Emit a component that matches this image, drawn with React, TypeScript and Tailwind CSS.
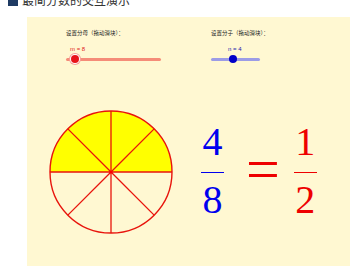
import React from 'react'

const cjk = { fontFamily: '"Noto Sans CJK SC", "Noto Sans", sans-serif' }
const serif = { fontFamily: '"Liberation Serif", "DejaVu Serif", serif' }

type SliderProps = {
  label: string
  value: string
  width: string
  trackColor: string
  thumb: React.ReactNode
  valueColor: string
  valueOffset: string
}

const Slider: React.FC<SliderProps> = ({ label, value, width, trackColor, thumb, valueColor, valueOffset }) => (
  <div className={`flex flex-col ${width}`}>
    <div className="h-[8px] text-[5.5px] leading-[8px] text-[#222] whitespace-nowrap" style={cjk}>{label}</div>
    <div className={`mt-[9px] h-[7px] text-[6px] leading-[7px] whitespace-nowrap ${valueColor} ${valueOffset}`} style={{ fontFamily: '"Liberation Sans", sans-serif' }}>
      {value}
    </div>
    <div className="relative h-[12px] flex items-center">
      <div className={`h-[3px] w-full rounded-full ${trackColor}`} />
      {thumb}
    </div>
  </div>
)

const PieChart: React.FC = () => {
  const cx = 63
  const cy = 63
  const r = 61
  const spokes = [0, 45, 90, 135, 180, 225, 270, 315]
  return (
    <svg width="126" height="126" viewBox="0 0 126 126" className="shrink-0">
      <path d={`M ${cx - r} ${cy} A ${r} ${r} 0 0 1 ${cx + r} ${cy} Z`} fill="#ffff00" />
      <circle cx={cx} cy={cy} r={r} fill="none" stroke="#e8140c" strokeWidth="1.4" />
      {spokes.map((a) => {
        const rad = (a * Math.PI) / 180
        return (
          <line
            key={a}
            x1={cx}
            y1={cy}
            x2={cx + r * Math.cos(rad)}
            y2={cy - r * Math.sin(rad)}
            stroke="#e8140c"
            strokeWidth="1.3"
          />
        )
      })}
      <circle cx={cx} cy={cy} r="1.6" fill="#ff0000" />
    </svg>
  )
}

const Fraction: React.FC<{ top: string; bottom: string; color: string; bar: string }> = ({ top, bottom, color, bar }) => (
  <div className={`flex flex-col items-center w-[23px] ${color}`} style={serif}>
    <div className="h-[40px] text-[40px] leading-[40px]">{top}</div>
    <div className={`mt-[10px] h-[1.5px] w-[23px] ${bar}`} />
    <div className="mt-[7px] h-[40px] text-[40px] leading-[40px]">{bottom}</div>
  </div>
)

const App: React.FC = () => {
  return (
    <div className="w-[350px] h-[266px] bg-white overflow-hidden">
      <div className="h-[17px] overflow-hidden">
        <div className="flex items-end h-[6px] pl-[8px] gap-[4px]">
          <svg width="10" height="14" viewBox="0 0 10 14" className="shrink-0">
            <polygon points="0,0 10,8 10,14 0,14" fill="#1f3b63" />
          </svg>
          <div className="text-[12px] leading-[14px] text-[#333] whitespace-nowrap -mb-[1px]" style={cjk}>
            最简分数的交互演示
          </div>
        </div>
      </div>
      <div className="ml-[27px] h-[249px] bg-[#fff8d2]">
        <div className="flex pt-[12px]">
          <div className="ml-[39px]">
            <Slider
              label="设置分母（拖动滑块）："
              value="m = 8"
              width="w-[95px]"
              trackColor="bg-[#f58c78]"
              valueColor="text-[#e02020]"
              valueOffset="pl-[4px]"
              thumb={
                <div className="absolute left-[3px] top-[0px] w-[12px] h-[12px] rounded-full bg-[#f6a09a] flex items-center justify-center">
                  <div className="w-[10px] h-[10px] rounded-full bg-white flex items-center justify-center">
                    <div className="w-[8px] h-[8px] rounded-full bg-[#e8141a]" />
                  </div>
                </div>
              }
            />
          </div>
          <div className="ml-[50px]">
            <Slider
              label="设置分子（拖动滑块）："
              value="n = 4"
              width="w-[49px]"
              trackColor="bg-[#9c9ce6]"
              valueColor="text-[#1a1ab0]"
              valueOffset="pl-[17px]"
              thumb={
                <div className="absolute left-[18px] top-[2px] w-[8px] h-[8px] rounded-full bg-[#0000c8]" />
              }
            />
          </div>
        </div>
        <div className="flex items-start mt-[44px] ml-[20.5px]">
          <PieChart />
          <div className="ml-[27.5px] mt-[12.5px]">
            <Fraction top="4" bottom="8" color="text-[#0000ee]" bar="bg-[#0000ee]" />
          </div>
          <div className="ml-[22px] mt-[30px] h-[60px] text-[60px] leading-[60px] text-[#ee0000]" style={serif}>
            =
          </div>
          <div className="ml-[14px] mt-[12.5px]">
            <Fraction top="1" bottom="2" color="text-[#ee0000]" bar="bg-[#ee0000]" />
          </div>
        </div>
      </div>
    </div>
  )
}

export default App
